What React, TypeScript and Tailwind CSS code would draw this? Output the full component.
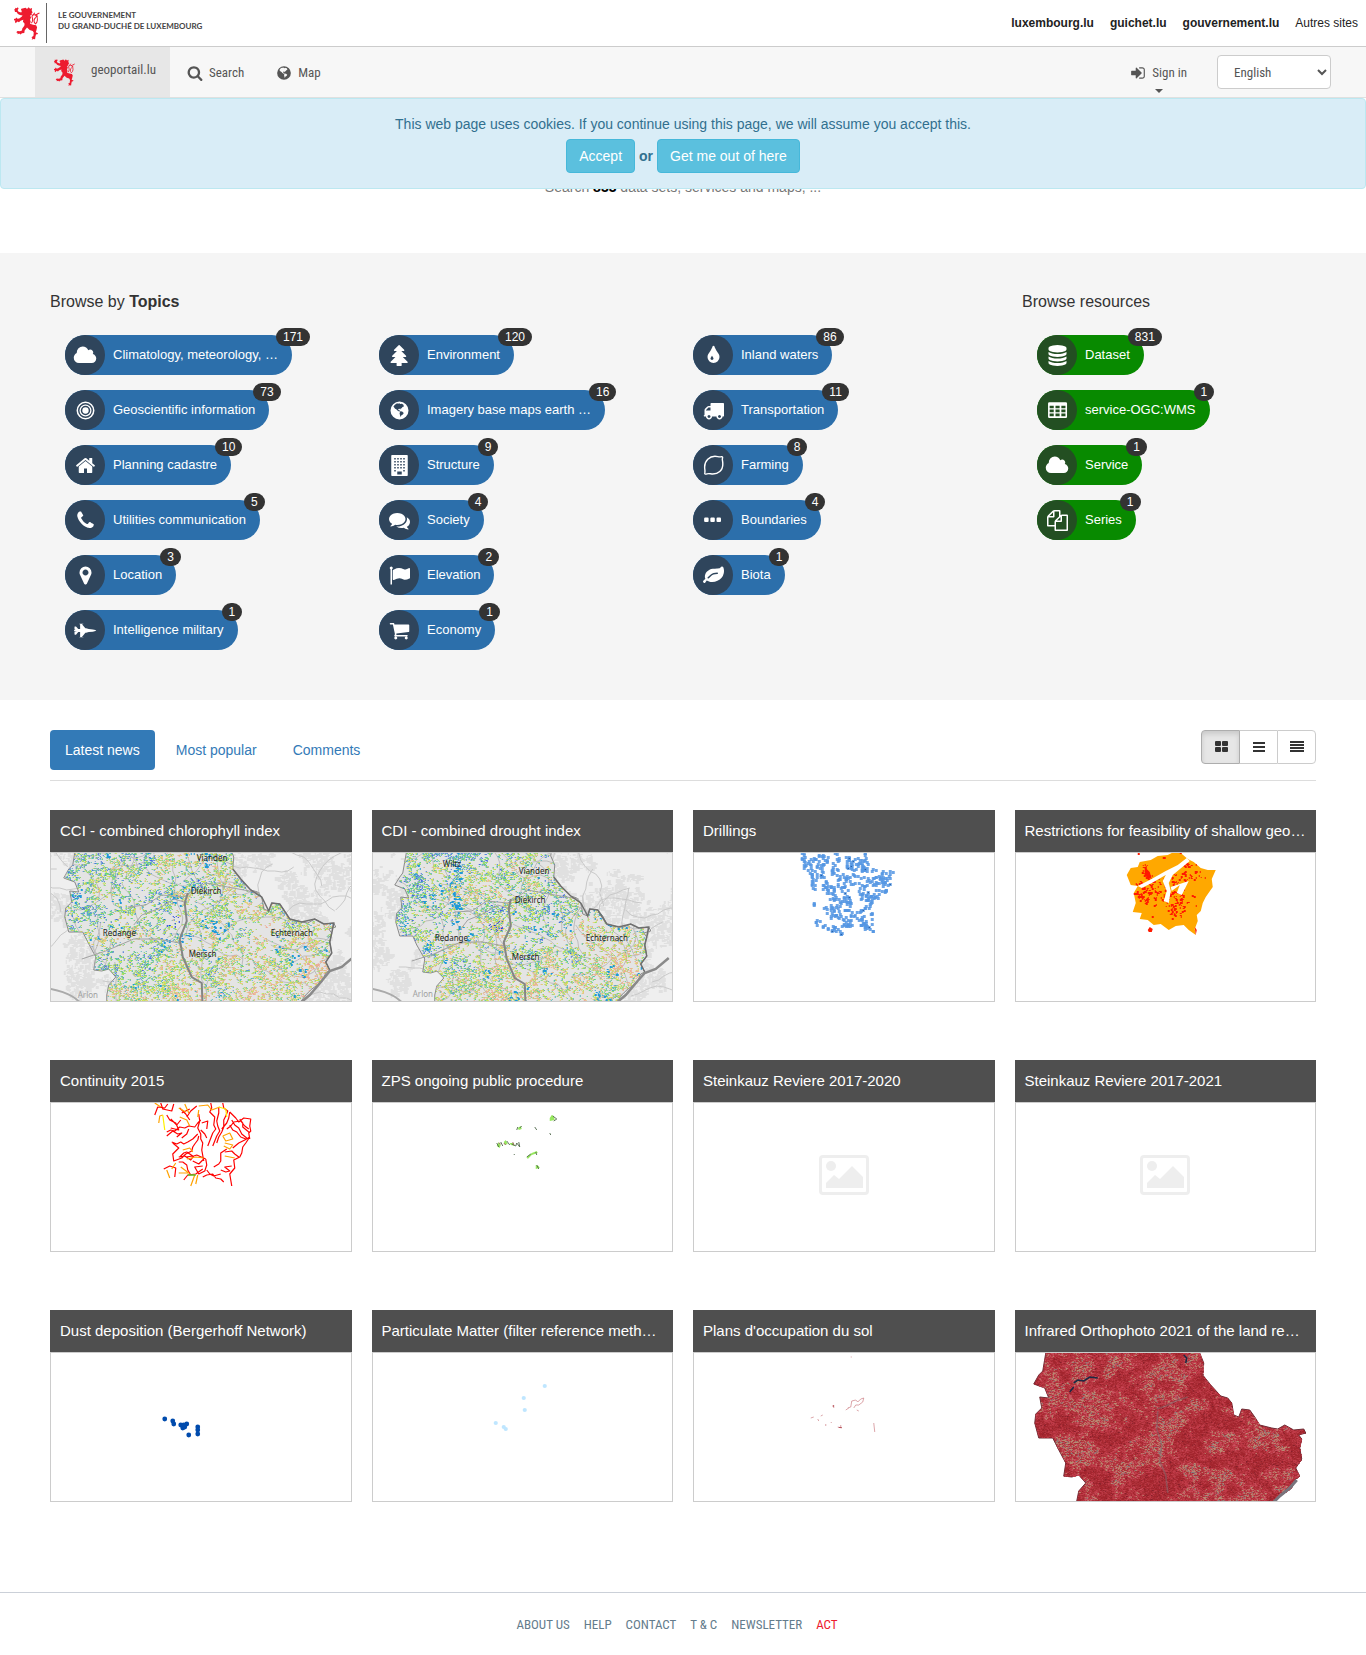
import type { ReactNode } from "react";

/* ---------- icons ---------- */

function Glyph({ d, w = 1792, size = 21, children }: { d?: string; w?: number; size?: number; children?: ReactNode }) {
  return (
    <svg width={(size * w) / 1792} height={size} viewBox={`0 0 ${w} 1792`} fill="currentColor" fillRule="evenodd" aria-hidden="true" className="shrink-0">
      {d ? <path d={d} /> : null}
      {children}
    </svg>
  );
}

const P = {
  search:
    "M1216 832q0-185-131.5-316.5t-316.5-131.5-316.5 131.5-131.5 316.5 131.5 316.5 316.5 131.5 316.5-131.5 131.5-316.5zm512 832q0 52-38 90t-90 38q-54 0-90-38l-343-342q-179 124-399 124-143 0-273.5-55.5t-225-150-150-225-55.5-273.5 55.5-273.5 150-225 225-150 273.5-55.5 273.5 55.5 225 150 150 225 55.5 273.5q0 220-124 399l343 343q37 37 37 90z",
  home: "M1472 992v480q0 26-19 45t-45 19h-384v-384h-256v384h-384q-26 0-45-19t-19-45v-480q0-1 .5-3t.5-3l575-474 575 474q1 2 1 6zm223-69l-62 74q-8 9-21 11h-3q-13 0-21-7l-692-577-692 577q-12 8-24 7-13-2-21-11l-62-74q-8-10-7-23.5t11-21.5l719-599q32-26 76-26t76 26l244 204v-195q0-14 9-23t23-9h192q14 0 23 9t9 23v408l219 182q10 8 11 21.5t-7 23.5z",
  cloud:
    "M1984 1152q0 159-112.5 271.5t-271.5 112.5h-1088q-185 0-316.5-131.5t-131.5-316.5q0-132 71-241.5t187-163.5q-2-28-2-43 0-212 150-362t362-150q158 0 286.5 88t187.5 230q70-62 166-62 106 0 181 75t75 181q0 75-41 138 129 30 213 134.5t84 239.5z",
  database:
    "M896 768q237 0 443-43t325-127v170q0 69-103 128t-280 93.5-385 34.5-385-34.5-280-93.5-103-128v-170q119 84 325 127t443 43zm0 768q237 0 443-43t325-127v170q0 69-103 128t-280 93.5-385 34.5-385-34.5-280-93.5-103-128v-170q119 84 325 127t443 43zm0-384q237 0 443-43t325-127v170q0 69-103 128t-280 93.5-385 34.5-385-34.5-280-93.5-103-128v-170q119 84 325 127t443 43zm0-1152q208 0 385 34.5t280 93.5 103 128v128q0 69-103 128t-280 93.5-385 34.5-385-34.5-280-93.5-103-128v-128q0-69 103-128t280-93.5 385-34.5z",
  marker:
    "M1152 640q0-106-75-181t-181-75-181 75-75 181 75 181 181 75 181-75 75-181zm256 0q0 109-33 179l-364 774q-16 33-47.5 52t-67.5 19-67.5-19-46.5-52l-365-774q-33-70-33-179 0-212 150-362t362-150 362 150 150 362z",
  phone:
    "M1600 1240q0 27-10 70.5t-21 68.5q-21 50-122 106-94 51-186 51-27 0-53-3.5t-57.5-12.5-47-14.5-55.5-20.5-49-18q-98-35-175-83-127-79-264-216t-216-264q-48-77-83-175-3-9-18-49t-20.5-55.5-14.5-47-12.5-57.5-3.5-53q0-92 51-186 56-101 106-122 25-11 68.5-21t70.5-10q14 0 21 3 18 6 53 76 11 19 30 54t35 63.5 31 53.5q3 4 17.5 25t21.5 35.5 7 28.5q0 20-28.5 50t-62 55-62 53-28.5 46q0 9 5 22.5t8.5 20.5 14 24 11.5 19q76 137 174 235t235 174q2 1 19 11.5t24 14 20.5 8.5 22.5 5q18 0 46-28.5t53-62 55-62 50-28.5q14 0 28.5 7t35.5 21.5 25 17.5q25 15 53.5 31t63.5 35 54 30q70 35 76 53 3 7 3 21z",
  tree: "M1600 1472q0 26-19 45t-45 19h-462q1 17 6 87.5t5 108.5q0 25-18 42.5t-43 17.5h-320q-25 0-43-17.5t-18-42.5q0-38 5-108.5t6-87.5h-462q-26 0-45-19t-19-45 19-45l402-403h-229q-26 0-45-19t-19-45 19-45l402-403h-197q-26 0-45-19t-19-45 19-45l384-384q19-19 45-19t45 19l384 384q19 19 19 45t-19 45-45 19h-197l402 403q19 19 19 45t-19 45-45 19h-229l402 403q19 19 19 45z",
  comments:
    "M1408 768q0 139-94 257t-256.5 186.5-353.5 68.5q-86 0-176-16-124 88-278 128-36 9-86 16h-3q-11 0-20.5-8t-11.5-21q-1-3-1-6.5t.5-6.5 2-6l2.5-5 3.5-5.5 4-5 4.5-5 4-4.5q5-6 23-25t26-29.5 22.5-29 25-38.5 20.5-44q-124-72-195-177t-71-224q0-139 94-257t256.5-186.5 353.5-68.5 353.5 68.5 256.5 186.5 94 257zm384 256q0 120-71 224.5t-195 176.5q10 24 20.5 44t25 38.5 22.5 29 26 29.5 23 25q1 1 4 4.5t4.5 5 4 5 3.5 5.5l2.5 5 2 6 .5 6.5-1 6.5q-3 14-13 22t-22 7q-50-7-86-16-154-40-278-128-90 16-176 16-271 0-472-132 58 4 88 4 161 0 309-45t264-129q125-92 192-212t67-254q0-77-23-152 129 71 204 178t75 230z",
  flag: "M320 256q0 72-64 110v1266q0 13-9.5 22.5t-22.5 9.5h-64q-13 0-22.5-9.5t-9.5-22.5v-1266q-64-38-64-110 0-53 37.5-90.5t90.5-37.5 90.5 37.5 37.5 90.5zm1472 64v763q0 25-12.5 38.5t-39.5 27.5q-215 116-369 116-61 0-123.5-22t-108.5-48-115.5-48-142.5-22q-192 0-464 146-17 9-33 9-26 0-45-19t-19-45v-742q0-32 31-55 21-14 79-43 236-120 421-120 107 0 200 29t219 88q38 19 88 19 54 0 117.5-21t110-47 88-47 54.5-21q26 0 45 19t19 45z",
  cart: "M704 1536q0 52-38 90t-90 38-90-38-38-90 38-90 90-38 90 38 38 90zm896 0q0 52-38 90t-90 38-90-38-38-90 38-90 90-38 90 38 38 90zm128-1088v512q0 24-16.5 42.5t-40.5 21.5l-1044 122q13 60 13 70 0 16-24 64h920q26 0 45 19t19 45-19 45-45 19h-1024q-26 0-45-19t-19-45q0-11 8-31.5t16-36 21.5-40 15.5-29.5l-177-823h-204q-26 0-45-19t-19-45 19-45 45-19h256q16 0 28.5 6.5t19.5 15.5 13 24.5 8 26 5.5 29.5 4.5 26h1201q26 0 45 19t19 45z",
  leaf: "M1280 704q0-26-19-45t-45-19q-172 0-318 49.5t-259.5 134-235.5 219.5q-19 21-19 45 0 26 19 45t45 19q24 0 45-19 27-24 74-71t67-66q137-124 268.5-176t313.5-52q26 0 45-19t19-45zm512-198q0 95-20 193-46 224-184.5 383t-357.5 268q-214 108-438 108-148 0-286-47-15-5-88-42t-96-37q-16 0-39.5 32t-45 70-52.5 70-60 32q-43 0-63.5-17.5t-45.5-59.5q-2-4-6-11t-5.5-10-3-9.5-1.5-13.5q0-35 31-73.5t68-65.5 68-56 31-48q0-4-14-38t-16-44q-9-51-9-104 0-115 43.5-220t119-184.5 170.5-139 204-95.5q55-18 145-25.5t179.5-9 178.5-6 163.5-24 113.5-56.5l29.5-29.5 29.5-28 27-20 36.5-16 43.5-4.5q39 0 70.5 46t47.5 112 24 124 8 96z",
  tint: "M896 1152q0-36-20-69-1-1-15.5-22.5t-25.5-38-25-44-21-50.5q-4-16-21-16t-21 16q-7 23-21 50.5t-25 44-25.5 38-15.5 22.5q-20 33-20 69 0 53 37.5 90.5t90.5 37.5 90.5-37.5 37.5-90.5zm512-128q0 212-150 362t-362 150-362-150-150-362q0-145 81-275 6-9 62.5-90.5t101-151 99.5-178 83-201.5q9-30 34-47t51-17 51.5 17 33.5 47q28 93 83 201.5t99.5 178 101 151 62.5 90.5q81 127 81 275z",
  truck:
    "M640 1408q0-52-38-90t-90-38-90 38-38 90 38 90 90 38 90-38 38-90zm-384-512h384v-256h-158q-13 0-22 9l-195 195q-9 9-9 22v30zm1280 512q0-52-38-90t-90-38-90 38-38 90 38 90 90 38 90-38 38-90zm256-1088v1024q0 15-4 26.5t-13.5 18.5-16.5 11.5-23.5 6-22.5 2-25.5 0-22.5-.5q0 106-75 181t-181 75-181-75-75-181h-384q0 106-75 181t-181 75-181-75-75-181h-64q-3 0-22.5.5t-25.5 0-22.5-2-23.5-6-16.5-11.5-13.5-18.5-4-26.5q0-26 19-45t45-19v-320q0-8-.5-35t0-38 2.5-34.5 6.5-37 14-30.5 22.5-30l198-198q19-19 50.5-32t58.5-13h160v-192q0-26 19-45t45-19h1024q26 0 45 19t19 45z",
  jet: "M1984 896q-1 32-288 96l-352 32-224 64h-64l-293 352h69q26 0 45 4.5t19 11.5-19 11.5-45 4.5h-288v-32h64v-416h-160l-192 224h-96l-32-32v-192h32v-32h128v-8l-192-24v-128l192-24v-8h-128v-32h-32v-192l32-32h96l192 224h160v-416h-64v-32h288q26 0 45 4.5t19 11.5-19 11.5-45 4.5h-69l293 352h64l224 64 352 32q256 57 288 96z",
  files:
    "M1696 384q40 0 68 28t28 68v1216q0 40-28 68t-68 28h-960q-40 0-68-28t-28-68v-288h-544q-40 0-68-28t-28-68v-672q0-40 20-88t48-76l408-408q28-28 76-48t88-20h416q40 0 68 28t28 68v328q68-40 128-40h416zm-544 213l-299 299h299v-299zm-640-384l-299 299h299v-299zm196 647l316-316v-416h-384v416q0 40-28 68t-68 28h-416v640h512v-256q0-40 20-88t48-76zm956 804v-1152h-384v416q0 40-28 68t-68 28h-416v640h896z",
  signIn:
    "M1312 896q0 26-19 45l-544 544q-19 19-45 19t-45-19-19-45v-288h-448q-26 0-45-19t-19-45v-384q0-26 19-45t45-19h448v-288q0-26 19-45t45-19 45 19l544 544q19 19 19 45zm352-352v704q0 119-84.5 203.5t-203.5 84.5h-320q-13 0-22.5-9.5t-9.5-22.5q0-4-1-20t-.5-26.5 3-23.5 10-19.5 20.5-6.5h320q66 0 113-47t47-113v-704q0-66-47-113t-113-47h-312l-11.5-1-11.5-3-8-5.5-7-9-2-13.5q0-4-1-20t-.5-26.5 3-23.5 10-19.5 20.5-6.5h320q119 0 203.5 84.5t84.5 203.5z",
  globe:
    "M896 128a768 768 0 1 1 0 1536a768 768 0 1 1 0-1536zM380 560L500 400L690 270L770 330L880 270L960 350L1100 310L1230 400L1270 560L1150 600L1080 700L1000 720L960 820L900 740L800 760L790 860L900 880L940 960L860 980L720 900L620 790L520 740L440 640zM960 960L1120 990L1260 1100L1180 1240L1060 1300L990 1460L940 1300L900 1120z",
};

function grid(cols: number, rows: number, x: number, y: number, w: number, h: number, dx: number, dy: number) {
  let d = "";
  for (let r = 0; r < rows; r++) for (let c = 0; c < cols; c++) d += `M${x + c * dx} ${y + r * dy}h${w}v${h}h${-w}z`;
  return d;
}

const icons: Record<string, ReactNode> = {
  cloud: <Glyph d={P.cloud} w={2048} />,
  target: (
    <Glyph>
      <circle cx="896" cy="896" r="270" />
      <circle cx="896" cy="896" r="460" fill="none" stroke="currentColor" strokeWidth="110" />
      <circle cx="896" cy="896" r="700" fill="none" stroke="currentColor" strokeWidth="130" />
    </Glyph>
  ),
  home: <Glyph d={P.home} />,
  phone: <Glyph d={P.phone} />,
  marker: <Glyph d={P.marker} />,
  jet: <Glyph d={P.jet} w={2048} />,
  tree: <Glyph d={P.tree} />,
  globe: <Glyph d={P.globe} />,
  building: <Glyph d={"M256 0h1280q64 0 64 64v1664q0 64-64 64h-1280q-64 0-64-64v-1664q0-64 64-64z" + grid(4, 4, 448, 256, 128, 128, 256, 256) + "M448 1280h128v128h-128zM1216 1280h128v128h-128zM704 1408h384v256h-384z"} />,
  comments: <Glyph d={P.comments} />,
  flag: <Glyph d={P.flag} />,
  cart: <Glyph d={P.cart} />,
  tint: <Glyph d={P.tint} />,
  truck: <Glyph d={P.truck} />,
  lemon: (
    <Glyph>
      <path
        d="M1540 150C1680 110 1700 200 1650 340C1640 420 1690 560 1690 760C1700 1300 1300 1650 760 1620C600 1600 500 1560 340 1610C180 1660 110 1640 160 1470C190 1340 140 1240 140 1020C140 480 560 120 1020 110C1240 110 1360 190 1540 150z"
        fill="none"
        stroke="currentColor"
        strokeWidth="120"
      />
    </Glyph>
  ),
  dots: (
    <Glyph>
      <rect x="96" y="640" width="384" height="384" rx="96" />
      <rect x="624" y="640" width="384" height="384" rx="96" />
      <rect x="1152" y="640" width="384" height="384" rx="96" />
    </Glyph>
  ),
  leaf: <Glyph d={P.leaf} />,
  database: <Glyph d={P.database} />,
  table: <Glyph d={"M200 192h1400q110 0 110 110v1124q0 110-110 110h-1400q-110 0-110-110v-1124q0-110 110-110z" + grid(3, 3, 224, 480, 352, 224, 500, 336)} />,
  files: <Glyph d={P.files} />,
};

function Lion({ className }: { className: string }) {
  return (
    <svg viewBox="42 20 76 98" className={className} fill="#ed1b2f" aria-hidden="true">
      <path d="M76 22l4 4 5-5 4 4 6-2-1 8 3 5-3 2 0 6-5 1 3 6-3 7 2 6-2 6 9 3 9 1 3 6-2 9-2 6 7 3-3 4-3-1-2 7-1 8-5-1-5 2 2-5-3-2 6-4 1-10-3-5-9-3-8-7-7 9-1 7-7 1-4 4-4-3-5 2 0-4-4-2 4-4 7 1 6-2 1-6 6-8 1-6-5-6 1-6-8 3-5 4-4-2-6 5-2-5 2-2-6-2 1-4 4 1 3-5 4 4 5-1 7-5 3-4-8-1-6-3-4-6-5 0 0-4-3-3 4-2 0-4 4 2 4-3 2 4-3 4 3 5 8 2 2-5-3-1 1-5z" />
      <path d="M93 68C99 62 97 55 95 49C95 42 101 42 107 44C113 52 112 66 105 70C99 64 101 56 106 51" fill="none" stroke="#ed1b2f" strokeWidth="3" />
      <path d="M104 45C108 43 112 40 117 38M98 44L103 37M106 50L112 46" fill="none" stroke="#ed1b2f" strokeWidth="3" />
    </svg>
  );
}

/* ---------- thumbnails ---------- */

function rng(seed: number) {
  let s = seed;
  return () => {
    s = (s * 1664525 + 1013904223) % 4294967296;
    return s / 4294967296;
  };
}

function lattice(x: number, y: number, seed: number) {
  const v = Math.sin(x * 127.1 + y * 311.7 + seed * 74.7) * 43758.5453;
  return v - Math.floor(v);
}

function noise(x: number, y: number, seed: number) {
  const xi = Math.floor(x);
  const yi = Math.floor(y);
  const fx = (x - xi) * (x - xi) * (3 - 2 * (x - xi));
  const fy = (y - yi) * (y - yi) * (3 - 2 * (y - yi));
  const a = lattice(xi, yi, seed);
  const b = lattice(xi + 1, yi, seed);
  const c = lattice(xi, yi + 1, seed);
  const d = lattice(xi + 1, yi + 1, seed);
  return a + (b - a) * fx + (c - a) * fy + (a - b - c + d) * fx * fy;
}

type Pt = [number, number];

function inside(x: number, y: number, poly: Pt[]) {
  let hit = false;
  for (let i = 0, j = poly.length - 1; i < poly.length; j = i++) {
    const [xi, yi] = poly[i];
    const [xj, yj] = poly[j];
    if (yi > y !== yj > y && x < ((xj - xi) * (y - yi)) / (yj - yi) + xi) hit = !hit;
  }
  return hit;
}

const toD = (poly: Pt[], close = true) => "M" + poly.map((p) => p.join(" ")).join("L") + (close ? "z" : "");

const COUNTRY: Pt[] = [
  [34, -25], [30, 0], [27, 18], [23, 22], [18, 31], [29, 35], [33, 45], [24, 44], [26, 55], [20, 61], [19, 70], [23, 85], [37, 85], [42, 95], [50, 110], [48, 123], [56, 124], [63, 122], [70, 130], [63, 138], [61, 148], [61, 175], [240, 175], [260, 148], [266, 142], [276, 135], [280, 126], [284, 123], [280, 115], [286, 106], [284, 95], [286, 86], [283, 82], [290, 80], [288, 76], [278, 77], [269, 72], [262, 76], [256, 75], [244, 72], [239, 64], [234, 57], [226, 56], [223, 64], [218, 62], [216, 50], [212, 45], [205, 43], [195, 32], [187, 22], [188, 10], [184, 0], [186, -25],
];

const sx = (s: number, ox: number, oy: number) => (p: Pt): Pt => [Math.round(p[0] * s + ox), Math.round(p[1] * s + oy)];

function speckle(poly: Pt[], seed: number, count: number, palette: string[], pick: (x: number, y: number, r: number) => number, max: number) {
  const r = rng(seed);
  const out = palette.map(() => "");
  for (let i = 0; i < count; i++) {
    const x = Math.floor(r() * 300);
    const y = Math.floor(r() * 150);
    const w = 1 + Math.floor(r() * max);
    const h = 1 + Math.floor(r() * max);
    const k = pick(x, y, r());
    if (k < 0 || k >= palette.length || !inside(x, y, poly)) continue;
    out[k] += `M${x} ${y}h${w}v${h}h${-w}z`;
  }
  return out.map((d, i) => <path key={i} d={d} fill={palette[i]} />);
}

function Thumb({ label, children }: { label: string; children: ReactNode }) {
  return (
    <svg viewBox="0 0 300 148" preserveAspectRatio="xMidYMid slice" className="block h-full w-full" role="img" aria-label={label}>
      {children}
    </svg>
  );
}

function wander(seed: number, n: number, width: number) {
  const r = rng(seed);
  let d = "";
  for (let i = 0; i < n; i++) {
    let x = r() * 300;
    let y = r() * 148;
    let a = r() * 6.28;
    d += `M${x.toFixed(0)} ${y.toFixed(0)}`;
    for (let k = 0; k < width; k++) {
      a += (r() - 0.5) * 1.1;
      x += Math.cos(a) * 7;
      y += Math.sin(a) * 7;
      d += `L${x.toFixed(0)} ${y.toFixed(0)}`;
    }
  }
  return d;
}

interface Place {
  name: string;
  x: number;
  y: number;
  faint?: boolean;
}

const indexPalette = ["#2a55e0", "#4a8ad0", "#3cb0b4", "#4cd070", "#92dc4a", "#d2e632", "#ecc06a", "#eea48c"];

function IndexMap({ id, seed, scale, ox, oy, places }: { id: string; seed: number; scale: number; ox: number; oy: number; places: Place[] }) {
  const shape = COUNTRY.map(sx(scale, ox, oy));
  const at = (pts: Pt[]) => toD(pts.map(sx(scale, ox, oy)), false);
  return (
    <Thumb label={id}>
      <rect width="300" height="148" fill="#efefef" />
      {speckle([[0, 0], [300, 0], [300, 148], [0, 148]], seed + 5, 9000, ["#e0e0e0"], (x, y) => (noise(x / 26, y / 26, seed) * 0.75 + noise(x / 6, y / 6, seed) * 0.25 > 0.53 ? 0 : -1), 4)}
      <path d={wander(seed + 9, 22, 18)} fill="none" stroke="#c9c9c9" strokeWidth="1" />
      <path d={toD(shape)} fill="#e4e4e4" stroke="#8a8a8a" strokeWidth="1" />
      <clipPath id={`clip-${seed}`}>
        <path d={toD(shape)} />
      </clipPath>
      <g clipPath={`url(#clip-${seed})`}>
        <path d={wander(seed + 21, 50, 12)} fill="none" stroke="#bdbdbd" strokeWidth="1" />
        <g opacity="0.85">
          {speckle(
            shape,
            seed,
            42000,
            indexPalette,
            (x, y, r) => {
              const cover = noise(x / 9, y / 8, seed + 1) * 0.35 + noise(x / 2.3, y / 2.3, seed + 2) * 0.65;
              const south = y > 112 && x < 130 ? 0.16 : y > 100 ? 0.08 : 0;
              const north = y < 62 ? 0.1 : 0.03;
              if (cover < 0.58 - south - north) return -1;
              const trend = 1.9 + (x / 300) * 2.4 + (y / 148) * 1.2 + (noise(x / 16, y / 14, seed + 3) - 0.5) * 4;
              return Math.max(0, Math.min(7, Math.round(trend + (r - 0.5) * 6)));
            },
            1,
          )}
        </g>
        {speckle(shape, seed + 3, 9000, ["#1a3ae0"], (x, y) => (Math.hypot((x - (126 * scale + ox)) / 1.2, y - (74 * scale + oy)) < 7 && noise(x / 3, y / 3, 2) > 0.45 ? 0 : -1), 1)}
        {speckle(shape, seed + 4, 9000, ["#1f9ad8"], (x, y) => (noise(x / 14, y / 12, seed + 8) > 0.78 && noise(x / 3, y / 3, 2) > 0.5 ? 0 : -1), 2)}
      </g>
      <path d={at([[82, 60], [100, 58], [116, 48], [138, 50], [160, 36], [182, 40], [214, 46]])} fill="none" stroke="#a2a2a2" strokeWidth="1" />
      <path d={at([[36, 112], [60, 104], [88, 92], [112, 92], [134, 96]])} fill="none" stroke="#a2a2a2" strokeWidth="1" />
      <path d={at([[88, 78], [96, 68], [112, 62], [128, 52], [142, 56]])} fill="none" stroke="#a2a2a2" strokeWidth="1" />
      <path d={at([[142, 46], [139, 56], [141, 74], [134, 92], [137, 110], [146, 130], [156, 136], [157, 165]])} fill="none" stroke="#858585" strokeWidth="2" />
      <path d={at([[187, 22], [195, 32], [205, 43], [216, 50], [223, 64], [226, 56], [234, 57], [244, 72], [256, 75], [269, 72], [278, 77], [288, 76], [286, 86], [284, 95], [286, 106], [280, 115], [284, 123]])} fill="none" stroke="#6f6f6f" strokeWidth="1.5" />
      <path d={at([[310, 108], [296, 120], [284, 124], [276, 134], [264, 148], [250, 160]])} fill="none" stroke="#8a8a8a" strokeWidth="2.5" />
      <path d="M0 136C20 140 26 146 32 152" fill="none" stroke="#aaaaaa" strokeWidth="2" />
      <g fontFamily="'Noto Sans', sans-serif" fontSize="8">
        {places.map((p) => (
          <text key={p.name} x={p.x} y={p.y} fill={p.faint ? "#a0a0a0" : "#222222"}>
            {p.name}
          </text>
        ))}
      </g>
    </Thumb>
  );
}

function Cci() {
  return (
    <IndexMap
      id="Combined chlorophyll index map"
      seed={11}
      scale={1}
      ox={-5}
      oy={-6}
      places={[
        { name: "Vianden", x: 146, y: 8 },
        { name: "Diekirch", x: 140, y: 41 },
        { name: "Redange", x: 52, y: 83 },
        { name: "Echternach", x: 220, y: 83 },
        { name: "Mersch", x: 138, y: 104 },
        { name: "Arlon", x: 27, y: 145, faint: true },
      ]}
    />
  );
}

function Cdi() {
  return (
    <IndexMap
      id="Combined drought index map"
      seed={29}
      scale={0.94}
      ox={5}
      oy={3}
      places={[
        { name: "Wiltz", x: 70, y: 14 },
        { name: "Vianden", x: 146, y: 21 },
        { name: "Diekirch", x: 142, y: 50 },
        { name: "Redange", x: 62, y: 88 },
        { name: "Echternach", x: 213, y: 88 },
        { name: "Mersch", x: 139, y: 107 },
        { name: "Arlon", x: 40, y: 144, faint: true },
      ]}
    />
  );
}

const DRILL: Pt[] = [[104, 0], [172, 0], [176, 14], [187, 18], [199, 17], [200, 27], [195, 38], [188, 48], [177, 53], [179, 66], [182, 80], [176, 80], [165, 72], [152, 74], [147, 84], [143, 80], [132, 76], [122, 73], [119, 56], [121, 40], [114, 27], [113, 17], [102, 14]];

function Drillings() {
  const r = rng(77);
  const dots: Pt[] = [];
  while (dots.length < 440) {
    const x = Math.floor(100 + r() * 102);
    const y = Math.floor(r() * 85);
    if (inside(x, y, DRILL) && noise(x / 7, y / 7, 5) > 0.38) dots.push([x, y]);
  }
  return (
    <Thumb label="Drillings map">
      {dots.map(([x, y], i) => (
        <rect key={i} x={x - 1} y={y - 1} width="3" height="3" fill="#5596e3" fillOpacity="0.85" />
      ))}
      {dots.slice(0, 14).map(([x, y], i) => (
        <rect key={i} x={x} y={y} width="1" height="1" fill="#1d4f90" />
      ))}
    </Thumb>
  );
}

const RESTRICT: Pt[] = [[111, 22], [115, 15], [122, 14], [124, 9], [135, 7], [142, 3], [152, 2], [156, 0], [165, 0], [172, 6], [178, 9], [185, 15], [192, 17], [200, 17], [196, 26], [197, 34], [190, 44], [187, 50], [185, 58], [181, 62], [182, 68], [179, 76], [180, 82], [173, 77], [168, 72], [160, 73], [153, 77], [145, 71], [138, 72], [132, 67], [124, 66], [126, 60], [117, 59], [120, 50], [118, 40], [122, 33], [115, 32]];

function Restrictions() {
  return (
    <Thumb label="Shallow geothermal restrictions map">
      <path d={toD(RESTRICT)} fill="#ffa800" />
      {speckle(
        RESTRICT,
        31,
        14000,
        ["#ff1a00"],
        (x, y) => {
          const near = Math.min(Math.hypot((x - 136) / 1.5, y - 39), Math.hypot(x - 161, y - 52) + 2, Math.hypot((x - 131) * 1.6, y - 18) + 5, Math.hypot(x - 178, y - 16) + 3, Math.hypot(x - 160, y - 27) + 1);
          return near < 14 && noise(x / 3, y / 3, 8) > 0.46 ? 0 : noise(x / 4, y / 4, 9) > 0.9 ? 0 : -1;
        },
        2,
      )}
      <path d="M122 33L134 27L150 18L162 12L171 5L174 8L163 17L157 22L153 30L155 38L153 50L148 48L151 38L147 28L150 22L136 30L126 35zM155 34L173 28L166 42L161 40L164 32L156 38z" fill="#ffffff" />
      <path d="M129 14l5 5 2 7-7-3zM132 77l2-3 3 2-1 3h-3zM122 0h2v2h-2zM179 74l2 3-1 5z" fill="#ff1a00" />
    </Thumb>
  );
}

function Continuity() {
  return (
    <Thumb label="River continuity map">
      <g fill="none" strokeWidth="1.2" strokeLinejoin="round">
        <path
          stroke="#ff0000"
          d="M104 12L107 4L114 5L117 1M110 0L112 6L121 8L123 1M116 12L119 17L125 20L128 27L120 25M129 5L135 11L139 17M139 6L131 10M146 3L140 8L136 14M130 17L126 22L120 16M116 29L120 27L124 28L129 24L134 25L138 23L144 24L147 20L150 17M116 33L122 28L127 31L131 30L126 34M138 26L136 31L131 35M148 11L149 18L147 25L150 31L150 36L152 40L151 47L153 58M151 20L157 18L156 26M150 27L154 31L156 35M160 0L161 5L159 9L164 14L163 22L165 26L162 30L157 43M168 4L168 10L166 18L167 23L169 28L166 33L162 43M172 0L173 5L177 8L175 13L173 17L173 24L171 29L168 34L166 40M179 9L178 15L176 20L171 26M179 9L185 15L188 19L193 15L200 16L199 23L200 28L198 30L199 36M181 17L184 22L188 25L191 31L196 35M179 22L182 27L186 29L190 34L195 36M189 16L192 20L192 24L198 29M176 26L180 23L183 19L190 18L194 23L198 26M199 34L195 40L192 44L191 50L189 54L183 57L184 65L179 71L181 83M199 34L194 37L188 40L182 45M174 49L181 48L184 51L188 54M121 39L126 41L130 39L133 41L137 39L142 36L147 31M122 40L128 45L122 51L123 58L131 55L135 51L141 48L142 44L144 41L147 37L148 33M129 54L133 50L136 49L142 53L135 54M128 54L134 53L140 57L143 53L146 52L155 56M153 56L148 61L142 58M155 56L156 62L154 68L148 71L144 64L152 63M128 59L132 59L136 62L137 67L140 72M113 66L119 63L125 65L124 74M133 77L137 72L145 71L152 66M152 74L156 72L162 71L165 75L170 76L173 79M156 67L159 71L163 73L170 71M170 67L175 69L179 68L174 64L181 63M163 64L168 61L170 58L170 50L176 46"
        />
        <path stroke="#ffa200" d="M104 0L110 4M128 5L135 9M134 1L138 10M129 14L136 17L139 23M148 3L157 2L161 7L169 4M148 7L147 14M108 20L109 13L112 12M132 47L139 45L142 49M136 56L145 54L153 55M172 33L179 30L182 36L175 38L172 33M174 40L182 42L179 46L173 43M174 53L184 55M125 60L121 66M130 64L138 70L128 70M116 67L119 75M144 72L140 83M147 72L145 81" />
        <path stroke="#fff000" d="M112 12L114 27M168 4L175 6L176 14" />
        <path stroke="#60c020" strokeWidth="1.6" d="M137 72L145 72" />
      </g>
    </Thumb>
  );
}

function Zps() {
  return (
    <Thumb label="ZPS map">
      <path d="M177 15l2-3 2 1 1 4-5 1zM124 43l2-4 2 3-1 3zM131 39l2-2 2 4-3 1zM137 40h4l1 3-4-1zM154 54l5-4 5-2 1 2-6 2-4 4zM163 62l3 1 1 2-4 1zM145 25l3-2 1 3-3 1z" fill="#97e85f" />
      <path d="M180 13l4 3-3 2M124 40l2 4M128 39l2 4M134 38l3 4M139 41l4 2 1-3 3 4-1-5M144 27l1-3M147 25l2-2M162 24l2 3M177 30l1 2M141 51l1 1M154 54l4-3M163 49l1 3M164 62l2 4" fill="none" stroke="#50684c" strokeWidth="0.9" />
      <path d="M126 40l2 1M131 40l2 2M140 39l1 3" fill="none" stroke="#a04f5f" strokeWidth="0.8" />
    </Thumb>
  );
}

function Dots({ label, points, radius, fill }: { label: string; points: Pt[]; radius: number; fill: string }) {
  return (
    <Thumb label={label}>
      {points.map(([x, y], i) => (
        <circle key={i} cx={x} cy={y} r={radius} fill={fill} />
      ))}
    </Thumb>
  );
}

function Plans() {
  return (
    <Thumb label="Land use plans map">
      <path
        d="M154 55L157 54L158 48L162 47L164 49L167 46L170 45L169 49L165 52L162 52L160 55M163 57l2 1M140 52v3M117 65l3-1M124 66l1 2M127 63l2-1M132 71v2M137 70l1-1M144 74l4 1M147 72v3M180 70l1 9M157 4h1M152 57l3-2"
        fill="none"
        stroke="#c46a70"
        strokeWidth="0.6"
      />
      <path d="M145 74h3v1h-3zM139 52h1v2h-1z" fill="#b8545c" />
    </Thumb>
  );
}

function Infrared() {
  return (
    <Thumb label="Infrared orthophoto">
      <path d={toD(COUNTRY)} fill="#ad3039" stroke="#6f2c35" strokeWidth="1" />
      {speckle(
        COUNTRY,
        91,
        42000,
        ["#861f2a", "#a3242d", "#c03b48", "#c9525f", "#b98a72", "#877a7c"],
        (x, y, r) => {
          const n = noise(x / 15 + y / 30, y / 13 - x / 60, 3) * 0.5 + noise(x / 5, y / 5, 4) * 0.3 + noise(x / 2, y / 2, 6) * 0.2;
          if (n < 0.4) return r < 0.18 ? 0 : r < 0.85 ? 1 : 2;
          if (n < 0.52) return r < 0.12 ? 0 : r < 0.4 ? 1 : 2;
          if (n < 0.62) return r < 0.45 ? 2 : r < 0.85 ? 3 : 4;
          return r < 0.5 ? 3 : r < 0.9 ? 4 : 5;
        },
        1,
      )}
      <path d="M58 30L62 27L68 28L74 24L82 25M54 39L58 34M168 2l3 3-1 5" fill="none" stroke="#1b2a44" strokeWidth="1.6" />
      <path d="M141 56L150 53L160 48L172 44M142 58L141 76L146 92L144 108L150 122L152 140M248 76l3 6" fill="none" stroke="#7d7073" strokeWidth="1.6" strokeOpacity="0.5" />
      <path d="M281 127L274 135L264 143L258 149" fill="none" stroke="#78747c" strokeWidth="3" />
    </Thumb>
  );
}

function NoPicture() {
  return (
    <div className="flex h-full items-center justify-center pb-1">
      <svg width="50" height="40" viewBox="0 0 50 40" fill="#eeeeee" role="img" aria-label="No preview">
        <path fillRule="evenodd" d="M4 0H46Q50 0 50 4V36Q50 40 46 40H4Q0 40 0 36V4Q0 0 4 0zM4 3Q3 3 3 4V36Q3 37 4 37H46Q47 37 47 36V4Q47 3 46 3z" />
        <circle cx="12" cy="11" r="5" />
        <path d="M7 33V28L15 20L20 24L33 11L44 22V33z" />
      </svg>
    </div>
  );
}

/* ---------- data ---------- */

interface Topic {
  label: string;
  count: number;
  icon: string;
}

const topicColumns: Topic[][] = [
  [
    { label: "Climatology, meteorology, …", count: 171, icon: "cloud" },
    { label: "Geoscientific information", count: 73, icon: "target" },
    { label: "Planning cadastre", count: 10, icon: "home" },
    { label: "Utilities communication", count: 5, icon: "phone" },
    { label: "Location", count: 3, icon: "marker" },
    { label: "Intelligence military", count: 1, icon: "jet" },
  ],
  [
    { label: "Environment", count: 120, icon: "tree" },
    { label: "Imagery base maps earth …", count: 16, icon: "globe" },
    { label: "Structure", count: 9, icon: "building" },
    { label: "Society", count: 4, icon: "comments" },
    { label: "Elevation", count: 2, icon: "flag" },
    { label: "Economy", count: 1, icon: "cart" },
  ],
  [
    { label: "Inland waters", count: 86, icon: "tint" },
    { label: "Transportation", count: 11, icon: "truck" },
    { label: "Farming", count: 8, icon: "lemon" },
    { label: "Boundaries", count: 4, icon: "dots" },
    { label: "Biota", count: 1, icon: "leaf" },
  ],
];

const resources: Topic[] = [
  { label: "Dataset", count: 831, icon: "database" },
  { label: "service-OGC:WMS", count: 1, icon: "table" },
  { label: "Service", count: 1, icon: "cloud" },
  { label: "Series", count: 1, icon: "files" },
];

const cards: { title: string; picture: ReactNode }[] = [
  { title: "CCI - combined chlorophyll index", picture: <Cci /> },
  { title: "CDI - combined drought index", picture: <Cdi /> },
  { title: "Drillings", picture: <Drillings /> },
  { title: "Restrictions for feasibility of shallow geo…", picture: <Restrictions /> },
  { title: "Continuity 2015", picture: <Continuity /> },
  { title: "ZPS ongoing public procedure", picture: <Zps /> },
  { title: "Steinkauz Reviere 2017-2020", picture: <NoPicture /> },
  { title: "Steinkauz Reviere 2017-2021", picture: <NoPicture /> },
  {
    title: "Dust deposition (Bergerhoff Network)",
    picture: <Dots label="Dust deposition stations" radius={2.4} fill="#004bad" points={[[114, 66], [122, 68], [123, 71], [130, 72], [132, 75], [134, 74], [136, 71], [133, 72], [138, 82], [147, 74], [147, 77], [147, 81]]} />,
  },
  {
    title: "Particulate Matter (filter reference meth…",
    picture: <Dots label="Particulate matter stations" radius={2.1} fill="#bfe6ff" points={[[172, 33], [151, 45], [152, 57], [123, 70], [131, 74], [133, 76]]} />,
  },
  { title: "Plans d'occupation du sol", picture: <Plans /> },
  { title: "Infrared Orthophoto 2021 of the land re…", picture: <Infrared /> },
];

const narrow = "font-['Roboto_Condensed','Liberation_Sans_Narrow',sans-serif]";

function Pill({ topic, green }: { topic: Topic; green?: boolean }) {
  return (
    <li className="flex">
      <a href="#topic" className={`relative flex h-10 items-center rounded-full pr-3.5 text-[13px] whitespace-nowrap text-white ${green ? "bg-[#088a00]" : "bg-[#2c6fab]"}`}>
        <span className={`mr-2 flex h-10 w-10 shrink-0 items-center justify-center rounded-full ${green ? "bg-[#234f22]" : "bg-[#2f455c]"}`}>{icons[topic.icon]}</span>
        <span>{topic.label}</span>
        <span className="absolute -top-[7px] left-full -ml-4 rounded-full bg-[#333333] px-[7px] text-xs leading-[18px]">{topic.count}</span>
      </a>
    </li>
  );
}

export default function App() {
  return (
    <div className="min-h-screen bg-white font-['Liberation_Sans',Arial,sans-serif] text-sm leading-5 text-[#333333]">
      <header className="flex h-[47px] items-center justify-between border-b border-[#cccccc] pr-2 pl-3.5">
        <a href="#gov" className="flex items-center">
          <Lion className="h-[33px] w-[26px]" />
          <span className="ml-1.5 h-10 w-px bg-[#666666]" />
          <span className="ml-[11px] flex flex-col pb-1 font-['Lato',sans-serif] text-[8px] leading-[11px] font-bold text-[#444444]">
            <span>LE GOUVERNEMENT</span>
            <span>DU GRAND-DUCHÉ DE LUXEMBOURG</span>
          </span>
        </a>
        <nav aria-label="Government sites" className="flex gap-4 text-xs leading-4 text-[#222222]">
          <a href="#luxembourg" className="font-bold">luxembourg.lu</a>
          <a href="#guichet" className="font-bold">guichet.lu</a>
          <a href="#gouvernement" className="font-bold">gouvernement.lu</a>
          <a href="#sites">Autres sites</a>
        </nav>
      </header>

      <div className="relative">
        <div className={`flex h-[51px] items-center border-b border-[#e0e0e0] bg-[#f7f7f7] px-[35px] text-[13px] leading-5 text-[#555555] ${narrow}`}>
          <a href="#home" className="flex h-full items-center bg-[#e7e7e7] pr-3.5 pl-[19px]">
            <Lion className="h-[27px] w-[21px]" />
            <span className="ml-4 pb-1">geoportail.lu</span>
          </a>
          <a href="#search" className="ml-[17px] flex items-center gap-1.5 pt-0.5">
            <Glyph d={P.search} size={16} />
            Search
          </a>
          <a href="#map" className="ml-8 flex items-center gap-1.5 pt-0.5">
            <Glyph d={P.globe} size={16} />
            Map
          </a>
          <button type="button" className="relative ml-auto flex items-center gap-1.5 pt-0.5">
            <Glyph d={P.signIn} size={16} />
            Sign in
            <span className="absolute top-full left-1/2 mt-1.5 -ml-1 border-x-4 border-t-4 border-x-transparent border-t-[#555555]" />
          </button>
          <select aria-label="Language" defaultValue="English" className="ml-[30px] h-[34px] w-[114px] rounded-[4px] border border-[#cccccc] bg-white px-3 text-[13px] text-[#555555]">
            <option>English</option>
            <option>Français</option>
            <option>Deutsch</option>
          </select>
        </div>

        <section className="flex h-[155px] items-end justify-center pb-14">
          <p className="text-[#777777]">
            Search <b className="text-black">833</b> data sets, services and maps, ...
          </p>
        </section>

        <div role="alert" className="absolute inset-x-0 top-[51px] flex flex-col items-center rounded-[4px] border border-[#bce8f1] bg-[#d9edf7] py-[15px] text-[#31708f]">
          <p>This web page uses cookies. If you continue using this page, we will assume you accept this.</p>
          <div className="mt-[5px] flex items-center gap-1">
            <button type="button" className="rounded-[4px] border border-[#46b8da] bg-[#5bc0de] px-3 py-1.5 text-white">Accept</button>
            <b>or</b>
            <button type="button" className="rounded-[4px] border border-[#46b8da] bg-[#5bc0de] px-3 py-1.5 text-white">Get me out of here</button>
          </div>
        </div>
      </div>

      <section className="grid grid-cols-4 gap-x-[30px] bg-[#f5f5f5] px-[50px] pt-[39px] pb-[50px]">
        <div className="col-span-3">
          <h2 className="mb-6 text-base leading-[19px]">
            Browse by <b>Topics</b>
          </h2>
          <div className="grid grid-cols-3">
            {topicColumns.map((column, i) => (
              <ul key={i} className="flex flex-col gap-[15px] pl-[15px]">
                {column.map((t) => (
                  <Pill key={t.label} topic={t} />
                ))}
              </ul>
            ))}
          </div>
        </div>
        <div>
          <h2 className="mb-6 text-base leading-[19px]">Browse resources</h2>
          <ul className="flex flex-col gap-[15px] pl-[15px]">
            {resources.map((t) => (
              <Pill key={t.label} topic={t} green />
            ))}
          </ul>
        </div>
      </section>

      <main className="px-[50px] pt-[30px]">
        <div className="flex items-start justify-between border-b border-[#dddddd] pb-2.5">
          <div role="tablist" className="flex gap-1.5">
            <button type="button" role="tab" aria-selected="true" className="rounded-[4px] bg-[#337ab7] px-[15px] py-2.5 text-white">Latest news</button>
            <button type="button" role="tab" aria-selected="false" className="rounded-[4px] px-[15px] py-2.5 text-[#337ab7]">Most popular</button>
            <button type="button" role="tab" aria-selected="false" className="rounded-[4px] px-[15px] py-2.5 text-[#337ab7]">Comments</button>
          </div>
          <div className="flex text-[#333333]">
            <button type="button" aria-label="Grid view" className="flex h-[34px] w-[39px] items-center justify-center rounded-l-[4px] border border-[#adadad] bg-[#e6e6e6] shadow-[inset_0_3px_5px_rgba(0,0,0,0.125)]">
              <svg width="14" height="14" viewBox="0 0 14 14" fill="currentColor">
                <rect x="1" y="1" width="6" height="5" rx="1" />
                <rect x="8" y="1" width="6" height="5" rx="1" />
                <rect x="1" y="7" width="6" height="5" rx="1" />
                <rect x="8" y="7" width="6" height="5" rx="1" />
              </svg>
            </button>
            <button type="button" aria-label="List view" className="flex h-[34px] w-[37px] items-center justify-center border-y border-[#cccccc]">
              <svg width="12" height="14" viewBox="0 0 12 14" fill="currentColor">
                <path d="M0 2h12v2H0zM0 6h12v2H0zM0 10h12v2H0z" />
              </svg>
            </button>
            <button type="button" aria-label="Compact view" className="flex h-[34px] w-[39px] items-center justify-center rounded-r-[4px] border border-[#cccccc]">
              <svg width="14" height="14" viewBox="0 0 14 14" fill="currentColor">
                <path d="M0 1h14v2H0zM0 4h14v2H0zM0 7h14v2H0zM0 10h14v2H0z" />
              </svg>
            </button>
          </div>
        </div>

        <div className="mt-[29px] grid grid-cols-4 gap-x-5 gap-y-[58px]">
          {cards.map((card) => (
            <a key={card.title} href="#record" className="block min-w-0">
              <h3 className="truncate bg-[#4f4f4f] px-2.5 text-[15px] leading-[42px] text-white">{card.title}</h3>
              <div className="h-[150px] overflow-hidden border border-[#cccccc]">{card.picture}</div>
            </a>
          ))}
        </div>
      </main>

      <footer className={`mt-[90px] flex justify-center gap-3.5 border-t border-[#cbd0d8] pt-[22px] pr-3 pb-5 text-[13px] leading-5 text-[#647c8c] ${narrow}`}>
        <a href="#about">ABOUT US</a>
        <a href="#help">HELP</a>
        <a href="#contact">CONTACT</a>
        <a href="#terms">T &amp; C</a>
        <a href="#newsletter">NEWSLETTER</a>
        <a href="#act" className="text-[#ed1b2f]">ACT</a>
      </footer>
    </div>
  );
}
